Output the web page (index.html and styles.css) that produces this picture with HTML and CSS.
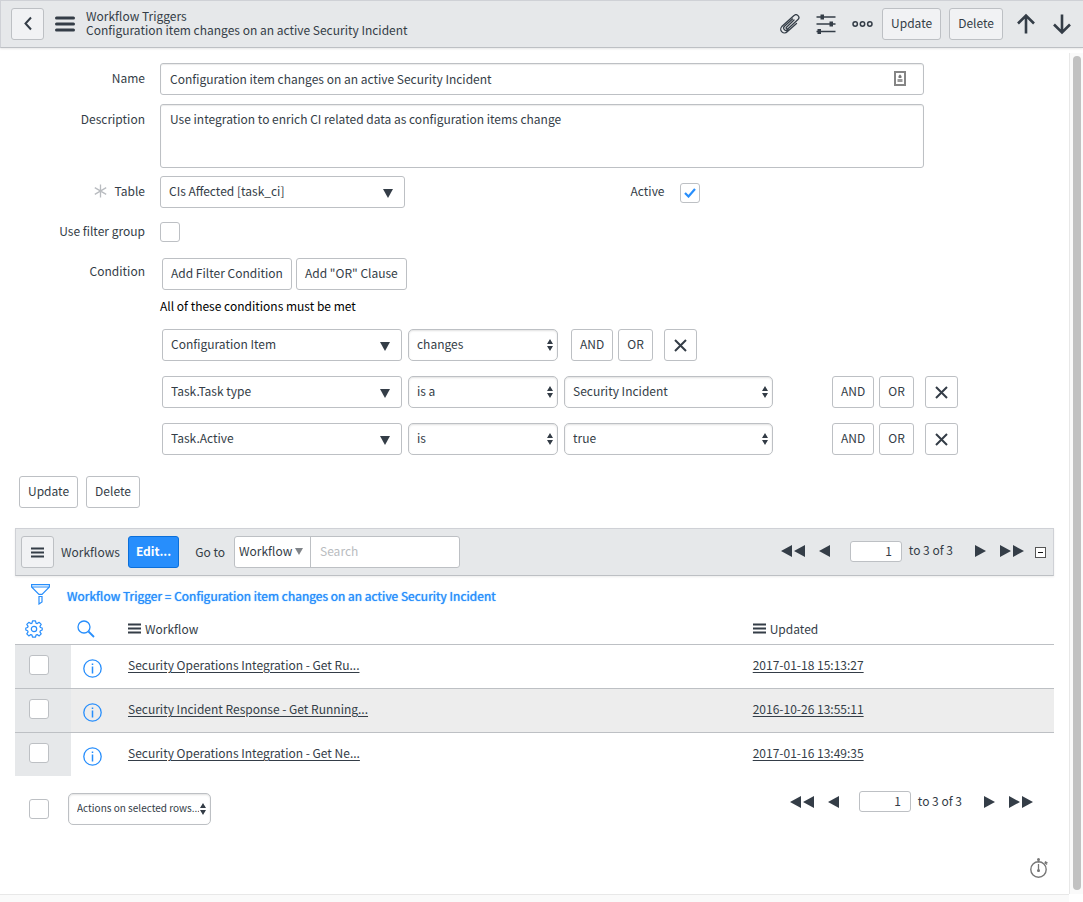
FILE: index.html
```html
<!DOCTYPE html>
<html lang="en">
<head>
    <meta charset="utf-8">
    <title>Workflow Triggers</title>
    <link rel="stylesheet" href="styles.css">
</head>
<body>
    <header class="navbar">
        <button type="button" class="btn btn-icon" aria-label="Back">
            <svg width="12" height="16" viewBox="0 0 12 16"><path d="M9 1.500L3.500 7.500L9 13.500" fill="none" stroke="currentColor" stroke-width="2"/></svg>
        </button>
        <button type="button" class="icon-btn menu-btn" aria-label="Menu">
            <svg width="20" height="16" viewBox="0 0 20 16"><path d="M1.500 2h17M1.500 8h17M1.500 14h17" stroke="currentColor" stroke-width="3" stroke-linecap="round"/></svg>
        </button>
        <div class="navbar-title">
            <div>Workflow Triggers</div>
            <div>Configuration item changes on an active Security Incident</div>
        </div>
        <div class="navbar-tools">
            <button type="button" class="icon-btn" aria-label="Attachments">
                <svg width="20" height="20" viewBox="0 0 20 20"><path d="M14 6L6.500 13.200a1 1 0 0 0 1.500 1.500L18 5.600a2.700 2.700 0 0 0-4-4L1.800 12.600a3.700 3.700 0 0 0 5.400 5.200L16.500 9.500M12.500 5L4.500 12.200a2.500 2.500 0 0 0 3.500 3.600" fill="none" stroke="currentColor" stroke-width="1.300" stroke-linecap="round" stroke-linejoin="round"/></svg>
            </button>
            <button type="button" class="icon-btn" aria-label="Personalize form">
                <svg width="20" height="20" viewBox="0 0 20 20"><path d="M0.500 3h19M0.500 10h19M0.500 17.500h19" stroke="currentColor" stroke-width="1.600"/><path d="M4.500 0.500h3.500v5h-3.500zM13.500 7.500h3.500v5h-3.500zM1.500 15h3.500v5h-3.500z" fill="currentColor"/></svg>
            </button>
            <button type="button" class="icon-btn" aria-label="More options">
                <svg width="21" height="8" viewBox="0 0 21 8"><g fill="none" stroke="currentColor" stroke-width="1.500"><circle cx="3.200" cy="4" r="2.200"/><circle cx="10.500" cy="4" r="2.200"/><circle cx="17.800" cy="4" r="2.200"/></g></svg>
            </button>
            <div class="navbar-actions">
                <button type="button" class="btn">Update</button>
                <button type="button" class="btn">Delete</button>
            </div>
            <button type="button" class="icon-btn" aria-label="Previous record">
                <svg width="20" height="22" viewBox="0 0 20 22"><path d="M10 20.500V3M2 10.500L10 2.500L18 10.500" fill="none" stroke="currentColor" stroke-width="2.600"/></svg>
            </button>
            <button type="button" class="icon-btn" aria-label="Next record">
                <svg width="20" height="22" viewBox="0 0 20 22"><path d="M10 1.500V19M2 11.500L10 19.500L18 11.500" fill="none" stroke="currentColor" stroke-width="2.600"/></svg>
            </button>
        </div>
    </header>

    <div class="page">
        <main class="content">
            <form class="record-form">
                <div class="form-row">
                    <label class="form-label" for="name">Name</label>
                    <div class="form-field wide name-field">
                        <input type="text" id="name" class="form-control" value="Configuration item changes on an active Security Incident">
                        <svg class="name-icon" width="12" height="15" viewBox="0 0 12 15"><rect x="1" y="1" width="10" height="13" fill="#fff" stroke="#858585" stroke-width="2"/><path d="M6 3l1.500 4h-3z" fill="#777"/><circle cx="6" cy="5.500" r="1.500" fill="#777"/><path d="M3.500 8h5v3h-5z" fill="#999"/></svg>
                    </div>
                </div>
                <div class="form-row">
                    <label class="form-label" for="description">Description</label>
                    <div class="form-field wide">
                        <textarea id="description" class="form-control">Use integration to enrich CI related data as configuration items change</textarea>
                    </div>
                </div>
                <div class="form-split">
                    <div class="form-row">
                        <label class="form-label" for="table"><svg class="mandatory" width="13" height="14" viewBox="0 0 13 14"><path d="M6.500 0.500v13M0.800 3.600l11.400 6.800M12.200 3.600L0.800 10.400" stroke="#b9bcc0" stroke-width="1.300"/></svg>Table</label>
                        <select id="table" class="lookup table-select"><option>CIs Affected [task_ci]</option></select>
                    </div>
                    <div class="form-row">
                        <label class="form-label" for="active">Active</label>
                        <input type="checkbox" id="active" class="check" checked>
                    </div>
                </div>
                <div class="form-row">
                    <label class="form-label" for="filter-group">Use filter group</label>
                    <input type="checkbox" id="filter-group" class="check">
                </div>
                <div class="form-row">
                    <div class="form-label">Condition</div>
                    <div class="conditions">
                        <div class="condition-buttons">
                            <button type="button" class="btn btn-plain">Add Filter Condition</button>
                            <button type="button" class="btn btn-plain">Add "OR" Clause</button>
                        </div>
                        <p class="condition-note">All of these conditions must be met</p>
                        <div class="condition-row short">
                            <select class="lookup cond-field" aria-label="Field"><option>Configuration Item</option></select>
                            <select class="picker cond-oper" aria-label="Operator"><option>changes</option></select>
                            <div class="cond-actions">
                                <button type="button" class="btn btn-plain">AND</button>
                                <button type="button" class="btn btn-plain">OR</button>
                                <button type="button" class="btn btn-plain btn-icon btn-remove" aria-label="Remove"><svg width="13" height="13" viewBox="0 0 13 13"><path d="M1 1l11 11M12 1L1 12" stroke="currentColor" stroke-width="2"/></svg></button>
                            </div>
                        </div>
                        <div class="condition-row">
                            <select class="lookup cond-field" aria-label="Field"><option>Task.Task type</option></select>
                            <select class="picker cond-oper" aria-label="Operator"><option>is a</option></select>
                            <select class="picker cond-value" aria-label="Value"><option>Security Incident</option></select>
                            <div class="cond-actions">
                                <button type="button" class="btn btn-plain">AND</button>
                                <button type="button" class="btn btn-plain">OR</button>
                                <button type="button" class="btn btn-plain btn-icon btn-remove" aria-label="Remove"><svg width="13" height="13" viewBox="0 0 13 13"><path d="M1 1l11 11M12 1L1 12" stroke="currentColor" stroke-width="2"/></svg></button>
                            </div>
                        </div>
                        <div class="condition-row">
                            <select class="lookup cond-field" aria-label="Field"><option>Task.Active</option></select>
                            <select class="picker cond-oper" aria-label="Operator"><option>is</option></select>
                            <select class="picker cond-value" aria-label="Value"><option>true</option></select>
                            <div class="cond-actions">
                                <button type="button" class="btn btn-plain">AND</button>
                                <button type="button" class="btn btn-plain">OR</button>
                                <button type="button" class="btn btn-plain btn-icon btn-remove" aria-label="Remove"><svg width="13" height="13" viewBox="0 0 13 13"><path d="M1 1l11 11M12 1L1 12" stroke="currentColor" stroke-width="2"/></svg></button>
                            </div>
                        </div>
                    </div>
                </div>
                <div class="form-buttons">
                    <button type="button" class="btn btn-plain">Update</button>
                    <button type="button" class="btn btn-plain">Delete</button>
                </div>
            </form>

            <section class="related-list">
                <div class="list-bar">
                    <button type="button" class="btn btn-icon" aria-label="List menu">
                        <svg width="13" height="11" viewBox="0 0 13 11"><path d="M0 1.500h13M0 5.500h13M0 9.500h13" stroke="currentColor" stroke-width="2"/></svg>
                    </button>
                    <span class="list-title">Workflows</span>
                    <button type="button" class="btn btn-primary">Edit...</button>
                    <label class="goto-label" for="goto">Go to</label>
                    <div class="search-group">
                        <select class="goto-field" aria-label="Search field"><option>Workflow</option></select>
                        <input type="text" id="goto" class="goto-input" placeholder="Search">
                    </div>
                    <div class="pager">
                        <button type="button" class="icon-btn" aria-label="First page"><svg width="24" height="12" viewBox="0 0 24 12"><path d="M11 0v12L0 6zM24 0v12L13 6z" fill="currentColor"/></svg></button>
                        <button type="button" class="icon-btn" aria-label="Previous page"><svg width="11" height="12" viewBox="0 0 11 12"><path d="M11 0v12L0 6z" fill="currentColor"/></svg></button>
                        <input type="text" class="page-input" value="1" aria-label="Row">
                        <span class="page-total">to 3 of 3</span>
                        <button type="button" class="icon-btn" aria-label="Next page"><svg width="11" height="12" viewBox="0 0 11 12"><path d="M0 0v12L11 6z" fill="currentColor"/></svg></button>
                        <button type="button" class="icon-btn" aria-label="Last page"><svg width="24" height="12" viewBox="0 0 24 12"><path d="M0 0v12L11 6zM13 0v12L24 6z" fill="currentColor"/></svg></button>
                    </div>
                    <button type="button" class="icon-btn collapse-btn" aria-label="Collapse list"><svg width="11" height="11" viewBox="0 0 11 11"><rect x="0.500" y="0.500" width="10" height="10" fill="#fff" stroke="#555"/><path d="M3 5.500h5" stroke="#111"/></svg></button>
                </div>

                <div class="breadcrumb">
                    <button type="button" class="icon-btn" aria-label="Filter">
                        <svg width="19" height="21" viewBox="0 0 19 21"><path d="M0.600 0.600h17.800v2.400L11 10.400H8L0.600 3zM0.600 3h17.800M8 12.500h3v5.500l-3 2z" fill="none" stroke="currentColor" stroke-width="1.200"/></svg>
                    </button>
                    <a href="#">Workflow Trigger = Configuration item changes on an active Security Incident</a>
                </div>

                <table class="list-table">
                    <thead>
                        <tr>
                            <th class="col-check"><button type="button" class="icon-btn" aria-label="Personalize list"><svg width="18" height="18" viewBox="0 0 18 18"><g fill="none" stroke="currentColor" stroke-width="1.200" stroke-linejoin="round"><circle cx="9" cy="9" r="2.700"/><path d="M7.500 0.800h3l.5 2.300 1.200.5 2-1.300 2 2-1.300 2 .5 1.200 1.800.5v2l-1.800.8-.5 1.100 1.300 2-2 2-2-1.300-1.200.5-.5 2.100h-3l-.5-2.100-1.200-.5-2 1.300-2-2 1.300-2-.5-1.100-1.800-.8v-2l1.800-.5.5-1.200-1.300-2 2-2 2 1.300 1.200-.5z"/></g></svg></button></th>
                            <th class="col-info"><button type="button" class="icon-btn" aria-label="Search"><svg width="18" height="18" viewBox="0 0 18 18"><path d="M11.500 11.500l5.500 5.500" stroke="currentColor" stroke-width="1.800"/><circle cx="7" cy="7" r="6" fill="none" stroke="currentColor" stroke-width="1.300"/></svg></button></th>
                            <th><svg width="13" height="11" viewBox="0 0 13 11"><path d="M0 1.500h13M0 5.500h13M0 9.500h13" stroke="currentColor" stroke-width="2"/></svg>Workflow</th>
                            <th class="col-updated"><svg width="13" height="11" viewBox="0 0 13 11"><path d="M0 1.500h13M0 5.500h13M0 9.500h13" stroke="currentColor" stroke-width="2"/></svg>Updated</th>
                        </tr>
                    </thead>
                    <tbody>
                        <tr>
                            <td class="col-check"><input type="checkbox" class="check" aria-label="Select row"></td>
                            <td class="col-info"><button type="button" class="icon-btn" aria-label="Preview"><svg width="19" height="19" viewBox="0 0 19 19"><circle cx="9.500" cy="9.500" r="8.700" fill="none" stroke="currentColor" stroke-width="1.300"/><path d="M9.500 7.500v7M9.500 4.500v1.600" stroke="currentColor" stroke-width="1.500"/></svg></button></td>
                            <td><a href="#">Security Operations Integration - Get Ru...</a></td>
                            <td><a href="#">2017-01-18 15:13:27</a></td>
                        </tr>
                        <tr>
                            <td class="col-check"><input type="checkbox" class="check" aria-label="Select row"></td>
                            <td class="col-info"><button type="button" class="icon-btn" aria-label="Preview"><svg width="19" height="19" viewBox="0 0 19 19"><circle cx="9.500" cy="9.500" r="8.700" fill="none" stroke="currentColor" stroke-width="1.300"/><path d="M9.500 7.500v7M9.500 4.500v1.600" stroke="currentColor" stroke-width="1.500"/></svg></button></td>
                            <td><a href="#">Security Incident Response - Get Running...</a></td>
                            <td><a href="#">2016-10-26 13:55:11</a></td>
                        </tr>
                        <tr>
                            <td class="col-check"><input type="checkbox" class="check" aria-label="Select row"></td>
                            <td class="col-info"><button type="button" class="icon-btn" aria-label="Preview"><svg width="19" height="19" viewBox="0 0 19 19"><circle cx="9.500" cy="9.500" r="8.700" fill="none" stroke="currentColor" stroke-width="1.300"/><path d="M9.500 7.500v7M9.500 4.500v1.600" stroke="currentColor" stroke-width="1.500"/></svg></button></td>
                            <td><a href="#">Security Operations Integration - Get Ne...</a></td>
                            <td><a href="#">2017-01-16 13:49:35</a></td>
                        </tr>
                    </tbody>
                </table>

                <div class="list-footer">
                    <div class="list-actions">
                        <input type="checkbox" class="check" aria-label="Select all rows">
                        <select class="picker actions-select" aria-label="Actions"><option>Actions on selected rows...</option></select>
                    </div>
                    <div class="pager">
                        <button type="button" class="icon-btn" aria-label="First page"><svg width="24" height="12" viewBox="0 0 24 12"><path d="M11 0v12L0 6zM24 0v12L13 6z" fill="currentColor"/></svg></button>
                        <button type="button" class="icon-btn" aria-label="Previous page"><svg width="11" height="12" viewBox="0 0 11 12"><path d="M11 0v12L0 6z" fill="currentColor"/></svg></button>
                        <input type="text" class="page-input" value="1" aria-label="Row">
                        <span class="page-total">to 3 of 3</span>
                        <button type="button" class="icon-btn" aria-label="Next page"><svg width="11" height="12" viewBox="0 0 11 12"><path d="M0 0v12L11 6z" fill="currentColor"/></svg></button>
                        <button type="button" class="icon-btn" aria-label="Last page"><svg width="24" height="12" viewBox="0 0 24 12"><path d="M0 0v12L11 6zM13 0v12L24 6z" fill="currentColor"/></svg></button>
                    </div>
                </div>
            </section>

            <div class="timing">
                <button type="button" class="icon-btn" aria-label="Response time">
                    <svg width="18" height="20" viewBox="0 0 18 20"><circle cx="8.500" cy="11.500" r="7.700" fill="none" stroke="currentColor" stroke-width="1.400"/><path d="M8.500 2.500v2M8.500 6v8M14.500 4.500l2.500 2M15 3.500l2.500 1.500" stroke="currentColor" stroke-width="1.300"/><circle cx="8.500" cy="1.500" r="1.500" fill="currentColor"/><circle cx="8.500" cy="12.500" r="1.500" fill="currentColor"/></svg>
                </button>
            </div>
        </main>
        <div class="scroll-track"><div class="scroll-thumb"></div></div>
    </div>
    <div class="bottom-strip"></div>
</body>
</html>
```
FILE: styles.css
```css
* { box-sizing: border-box; }
body { display: flex; flex-direction: column; min-height: 100vh; margin: 0; background: #fff; color: #343d47; font-family: "Noto Sans CJK SC", "Open Sans", sans-serif; font-size: 12px; line-height: 18px; }
button, input, select, textarea { font: inherit; color: inherit; margin: 0; }
svg { display: block; flex: none; }

/* buttons */
.btn { height: 32px; padding: 0 8px 2px; border: 1px solid #bdc0c4; border-radius: 3px; background: #f1f2f4; cursor: pointer; white-space: nowrap; }
.btn-plain { background: #fff; }
.btn-icon { display: flex; align-items: center; justify-content: center; width: 33px; padding: 0; }
.btn-primary { padding: 0 7px 2px; background: #278efc; border-color: #0b6fda; color: #fff; font-weight: bold; }
.icon-btn { display: flex; padding: 0; border: none; background: none; cursor: pointer; }

/* form controls */
.form-control { display: block; width: 100%; height: 32px; padding: 0 9px 2px; border: 1px solid #bdc0c4; border-radius: 3px; background: #fff; box-shadow: inset 0 1px 1px rgba(0,0,0,0.08); }
textarea.form-control { height: 64px; padding: 5px 9px; resize: none; }
.lookup, .picker { height: 32px; padding: 0 24px 2px 8px; border: 1px solid #bdc0c4; border-radius: 3px; appearance: none; background: #fff no-repeat; }
.lookup { background-image: url("data:image/svg+xml,%3Csvg xmlns='http://www.w3.org/2000/svg' width='10' height='9'%3E%3Cpath d='M0 0h10L5 9z' fill='%23343d47'/%3E%3C/svg%3E"); background-position: right 11px top 12px; }
.picker { border-radius: 5px; box-shadow: inset 0 1px 2px rgba(0,0,0,0.12); background-image: url("data:image/svg+xml,%3Csvg xmlns='http://www.w3.org/2000/svg' width='6' height='12'%3E%3Cpath d='M3 0l3 5H0zM3 12l3-5H0z' fill='%23343d47'/%3E%3C/svg%3E"); background-position: right 4px top 9px; }
.check { appearance: none; flex: none; display: block; width: 20px; height: 20px; border: 1px solid #bdc0c4; border-radius: 3px; background: #fff; }
.check:checked { background: #fff url("data:image/svg+xml,%3Csvg xmlns='http://www.w3.org/2000/svg' width='12' height='10'%3E%3Cpath d='M1 5l3.500 3.500L11 1' fill='none' stroke='%23278efc' stroke-width='2.200'/%3E%3C/svg%3E") no-repeat center; }

/* top bar */
.navbar { display: flex; align-items: center; height: 48px; padding: 0 11px 0 10px; background: #e6e8ea; border: 1px solid #cfd1d6; border-width: 1px 0 1px 1px; border-bottom-color: #bdc0c4; box-shadow: 0 1px 2px rgba(0,0,0,0.1); }
.menu-btn { margin: 0 11px; }
.navbar-title { line-height: 14px; padding-bottom: 3px; }
.navbar-tools { display: flex; align-items: center; gap: 16px; margin-left: auto; }
.navbar-actions { display: flex; gap: 8px; margin: 0 -3px 0 -7px; }

.page { display: flex; flex: 1; padding-top: 5px; }
.content { flex: 1; display: flex; flex-direction: column; padding: 10px 15px 0 0; }

/* form */
.record-form { display: flex; flex-direction: column; gap: 8px; }
.form-row { display: flex; align-items: center; min-height: 32px; }
.form-row:first-child { margin-bottom: 1px; }
.form-label { flex: none; align-self: flex-start; display: flex; justify-content: flex-end; align-items: center; width: 145px; margin-right: 15px; padding-top: 6px; }
.form-field { flex: 1; }
.wide { margin-right: 130px; }
.name-field { position: relative; }
.name-icon { position: absolute; right: 18px; top: 8px; }
.mandatory { margin-right: 8px; }
.form-split { display: grid; grid-template-columns: 1fr 1fr; margin: 0 -15px -1px 0; }
.form-split .form-row + .form-row .form-label { width: 130px; }
.table-select { width: 245px; }
.conditions { padding: 2px 0 0 2px; }
.condition-buttons { display: flex; gap: 4px; }
.condition-note { margin: 7px 0 14px -2px; color: #000; }
.condition-row { display: flex; gap: 6px; margin-bottom: 15px; }
.cond-field { width: 240px; }
.cond-oper { width: 150px; }
.cond-value { width: 209px; }
.cond-actions { display: flex; gap: 5px; margin-left: 53px; }
.short .cond-actions { margin-left: 7px; }
.btn-remove { margin-left: 6px; }
.form-buttons { display: flex; gap: 8px; padding-left: 19px; margin-top: -2px; }

/* related list */
.related-list { margin: 20px 0 0 15px; }
.list-bar { display: flex; align-items: center; height: 48px; padding: 0 7px 0 5px; background: #e6e8ea; border: 1px solid #cfd1d6; border-bottom-color: #bdc0c4; box-shadow: 0 1px 2px rgba(0,0,0,0.08); }
.list-title { margin: 0 8px 0 7px; }
.goto-label { margin: 0 9px 0 16px; }
.search-group { display: flex; height: 32px; border: 1px solid #bdc0c4; border-radius: 3px; background: #fff; }
.goto-field { width: 76px; padding: 0 4px 2px; border: none; border-right: 1px solid #bdc0c4; appearance: none; background: url("data:image/svg+xml,%3Csvg xmlns='http://www.w3.org/2000/svg' width='8' height='7'%3E%3Cpath d='M0 0h8L4 7z' fill='%23808489'/%3E%3C/svg%3E") no-repeat right 7px top 11px; }
.goto-input { width: 148px; padding: 0 9px 2px; border: none; background: none; }
.goto-input::placeholder { color: #b9bcc0; }
.pager { display: flex; align-items: center; margin-left: auto; gap: 14px; }
.page-input { width: 52px; height: 21px; margin-left: 6px; padding: 0 9px 2px; border: 1px solid #bdc0c4; border-radius: 3px; background: #fff; text-align: right; }
.page-total { margin: 0 8px 0 -7px; padding-bottom: 2px; }
.list-bar .pager { padding-bottom: 2px; }
.collapse-btn { margin-left: 11px; }

.breadcrumb { display: flex; align-items: center; gap: 17px; height: 36px; padding-left: 16px; color: #278efc; }
.breadcrumb a { padding-top: 4px; color: inherit; text-decoration: none; text-shadow: 0 0 1px #278efc; }

.list-table { width: 100%; border-collapse: collapse; table-layout: fixed; }
.list-table th { height: 32px; padding: 2px 0 0; text-align: left; font-weight: normal; border-bottom: 1px solid #bdc0c4; }
.list-table th svg { display: inline-block; margin-right: 4px; }
.list-table th .icon-btn { color: #278efc; }
.list-table th .icon-btn svg { margin: 0; }
.list-table td { height: 44px; padding: 0 0 2px; border-bottom: 1px solid #bdc0c4; }
.list-table tr:last-child td { border-bottom: none; }
.list-table tbody tr:nth-child(even) { background: #ededed; }
.list-table td a { color: inherit; text-underline-offset: 2px; }
.list-table .col-check { width: 56px; }
.list-table .col-info { width: 57px; }
.list-table .col-updated { width: 29%; }
.list-table td.col-check { padding-left: 14px; background: #e6e8ea; }
.list-table td.col-info { padding: 4px 0 0 12px; }
.col-info .icon-btn { color: #278efc; }
.list-table th.col-check { padding-left: 10px; }
.list-table th.col-info { padding-left: 6px; }

.list-footer { display: flex; align-items: flex-start; padding: 15px 21px 0 14px; }
.list-actions { display: flex; align-items: center; gap: 19px; padding-top: 2px; }
.actions-select { width: 143px; padding-right: 11px; font-size: 10px; }
.timing { display: flex; justify-content: flex-end; padding: 33px 6px 0 0; color: #777; }

.scroll-track { width: 14px; padding: 3px 2px 4px 3px; border-left: 1px solid #e8e8e8; background: #fafafa; }
.scroll-thumb { height: 100%; border-radius: 4px; background: #c1c1c1; }
.bottom-strip { height: 8px; margin-right: 14px; background: #fafafa; border-top: 1px solid #e8e8e8; }
```
